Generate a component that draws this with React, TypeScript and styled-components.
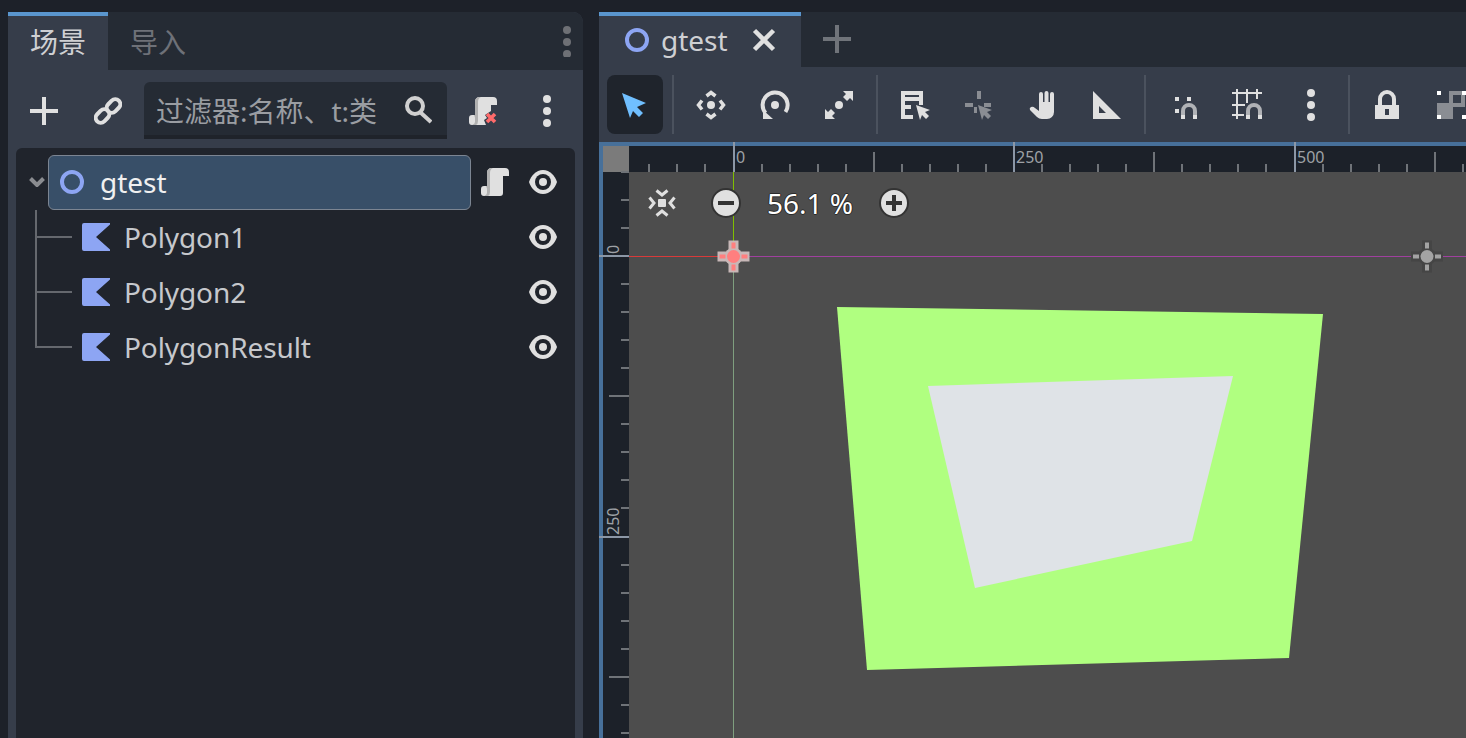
import React from 'react';
import styled, { createGlobalStyle } from 'styled-components';

const GlobalStyle = createGlobalStyle`
  html, body {
    margin: 0;
    padding: 0;
    background: #1d2129;
  }
  * {
    box-sizing: border-box;
  }
`;

const ICON = '#e0e0e0';
const ACCENT = '#8da5f3';

const Page = styled.div`
  width: 1466px;
  height: 738px;
  overflow: hidden;
  display: flex;
  gap: 16px;
  padding: 12px 0 0 8px;
  background: #1d2129;
  font-family: "Noto Sans", "Noto Sans CJK SC", sans-serif;
  font-size: 28px;
  color: #cfd0d3;
`;

const LeftDock = styled.section`
  width: 575px;
  display: flex;
  flex-direction: column;
  background: #363d4a;
  border-radius: 0 10px 0 0;
  overflow: hidden;
`;

const RightDock = styled.section`
  flex: 1;
  min-width: 0;
  display: flex;
  flex-direction: column;
  background: #363d4a;
`;

const TabBar = styled.div<{ $height: number }>`
  height: ${(p) => p.$height}px;
  flex-shrink: 0;
  display: flex;
  align-items: stretch;
  background: #252b34;
`;

const Tab = styled.div<{ $active?: boolean; $width: number }>`
  width: ${(p) => p.$width}px;
  display: flex;
  align-items: center;
  padding-bottom: 4px;
  border-top: 4px solid ${(p) => (p.$active ? '#5a96ce' : 'transparent')};
  background: ${(p) => (p.$active ? '#363d4a' : 'transparent')};
  color: ${(p) => (p.$active ? '#cfd0d3' : '#6e7178')};
`;

const DockTab = styled(Tab)`
  justify-content: center;
`;

const SceneTab = styled(Tab)`
  padding-left: 26px;
  gap: 12px;
`;

const CloseIcon = styled.svg`
  width: 24px;
  height: 24px;
  margin-left: 12px;
`;

const AddTab = styled.div`
  width: 72px;
  display: flex;
  align-items: center;
  justify-content: center;
  padding-bottom: 2px;
`;

const TabMenu = styled.div`
  margin-left: auto;
  width: 32px;
  display: flex;
  align-items: center;
  justify-content: center;
`;

const SceneToolbar = styled.div`
  height: 78px;
  flex-shrink: 0;
  display: flex;
  gap: 8px;
  padding: 12px 0 9px 8px;
`;

const FilterBox = styled.div`
  width: 303px;
  display: flex;
  align-items: center;
  justify-content: space-between;
  padding: 2px 15px 0 12px;
  background: #252b34;
  border-bottom: 4px solid #1f232a;
  border-radius: 6px 6px 0 0;
  color: #9a9da2;
  white-space: nowrap;
`;

const ToolButton = styled.div<{ $active?: boolean; $height?: number }>`
  width: 56px;
  height: ${(p) => p.$height ?? 59}px;
  flex-shrink: 0;
  display: flex;
  align-items: center;
  justify-content: center;
  border-radius: 8px;
  background: ${(p) => (p.$active ? '#1f242c' : 'transparent')};
`;

const TreePanel = styled.div`
  flex: 1;
  margin: 0 8px;
  padding-top: 7px;
  background: #20242c;
  border-radius: 6px 6px 0 0;
`;

const TreeRow = styled.div`
  height: 55px;
  display: flex;
  align-items: center;
  padding: 0 18px 2px 0;
`;

const Expander = styled.div`
  width: 32px;
  display: flex;
  justify-content: flex-end;
  padding-right: 3px;
`;

const SelectedLabel = styled.div`
  width: 423px;
  height: 55px;
  flex-shrink: 0;
  align-self: flex-start;
  display: flex;
  align-items: center;
  gap: 16px;
  padding: 0 0 2px 11px;
  margin-right: 10px;
  background: #384f68;
  border: 1px solid #7c8592;
  border-radius: 6px;
  color: #f0f0f0;
`;

const TreeGuide = styled.div<{ $last?: boolean }>`
  position: relative;
  width: 66px;
  height: 55px;
  flex-shrink: 0;
  align-self: flex-start;

  &::before {
    content: '';
    position: absolute;
    left: 19px;
    top: 0;
    width: 2px;
    height: ${(p) => (p.$last ? '28px' : '100%')};
    background: #65686e;
  }

  &::after {
    content: '';
    position: absolute;
    left: 19px;
    top: 26px;
    width: 37px;
    height: 2px;
    background: #65686e;
  }
`;

const NodeName = styled.span`
  margin-left: 14px;
  letter-spacing: -0.1px;
  color: #c6c8cc;
`;

const RowActions = styled.div`
  margin-left: auto;
  display: flex;
  align-items: center;
  gap: 20px;
`;

const EditorToolbar = styled.div`
  height: 75px;
  flex-shrink: 0;
  display: flex;
  align-items: flex-start;
  gap: 8px;
  padding: 8px 0 0 8px;
  overflow: hidden;
`;

const ToolSeparator = styled.div`
  width: 2px;
  height: 59px;
  margin: 0 1px;
  flex-shrink: 0;
  background: #4b525e;
`;

const Viewport = styled.div`
  position: relative;
  flex: 1;
  min-height: 0;
  border-top: 4px solid #47709a;
  border-left: 4px solid #47709a;
  background: #4d4d4d;
`;

const ViewportArt = styled.svg`
  position: absolute;
  inset: 0;
  width: 100%;
  height: 100%;
  overflow: visible;
`;

const ZoomControls = styled.div`
  position: absolute;
  left: 43px;
  top: 39px;
  height: 36px;
  display: flex;
  align-items: center;
`;

const ZoomValue = styled.span`
  width: 136px;
  text-align: center;
  color: #fff;
  text-shadow: -1px 0 #2a2a2a, 1px 0 #2a2a2a, 0 -1px #2a2a2a, 0 1px #2a2a2a;
`;

const ZoomFit = styled.svg`
  width: 32px;
  height: 32px;
  margin-right: 32px;
`;

const RulerLabel = styled.text`
  font-family: "Noto Sans", sans-serif;
  font-size: 16px;
  fill: #9ea1a6;
`;

const Icon: React.FC<{ size?: number; children: React.ReactNode }> = ({ size = 32, children }) => (
  <svg width={size} height={size} viewBox={`0 0 ${size} ${size}`} fill="none" style={{ flexShrink: 0 }}>
    {children}
  </svg>
);

const Plus: React.FC<{ color?: string }> = ({ color = ICON }) => (
  <Icon>
    <path d="M2 14h28v4H2zM14 2h4v28h-4z" fill={color} />
  </Icon>
);

const Dots: React.FC<{ color?: string }> = ({ color = ICON }) => (
  <Icon>
    <circle cx="16" cy="4" r="4" fill={color} />
    <circle cx="16" cy="16" r="4" fill={color} />
    <circle cx="16" cy="28" r="4" fill={color} />
  </Icon>
);

const Ring: React.FC = () => (
  <Icon size={24}>
    <circle cx="12" cy="12" r="10" stroke={ACCENT} strokeWidth="4" />
  </Icon>
);

const Eye: React.FC = () => (
  <Icon size={28}>
    <path d="M14 2C7 2 2 8 0 14c2 6 7 12 14 12s12-6 14-12C26 8 21 2 14 2z" fill={ICON} />
    <circle cx="14" cy="14" r="8" fill="#20242c" />
    <circle cx="14" cy="14" r="4" fill={ICON} />
  </Icon>
);

const ScriptIcon: React.FC = () => (
  <Icon size={28}>
    <path d="M11 0h13q4 0 4 4v4h-6v17q0 3-3 3H3q-3 0-3-3v-4q0-3 3-3h3V5q0-5 5-5z" fill={ICON} />
    <path d="M6 18V5q0-5 5-5h1q-3 1-3 5v19q0 3-2 4H3q3-1 3-3v-4q0-1-1-3z" fill="#b0b0b0" />
  </Icon>
);

const ScriptRemove: React.FC = () => (
  <Icon size={28}>
    <path d="M11 0h13q4 0 4 4v4h-6v6l-6 4 2 3-3 2 2 5H3q-3 0-3-3v-4q0-3 3-3h3V5q0-5 5-5z" fill={ICON} />
    <path d="M6 18V5q0-5 5-5h1q-3 1-3 5v19q0 3-2 4H3q3-1 3-3v-4q0-1-1-3z" fill="#b0b0b0" />
    <path d="M18 17l8 8m0-8l-8 8" stroke="#ff6b6b" strokeWidth="3.6" />
  </Icon>
);

const PolygonIcon: React.FC = () => (
  <Icon size={28}>
    <path d="M2 0h26v1.500L14 14l14 12.500V28H2q-2 0-2-2V2q0-2 2-2z" fill={ACCENT} />
  </Icon>
);

const Chevron: React.FC = () => (
  <svg width="16" height="10" viewBox="0 0 16 10" fill="none">
    <path d="M1.500 1.500L8 8l6.500-6.500" stroke="#8a8c90" strokeWidth="4" />
  </svg>
);

const Arch: React.FC<{ x: number }> = ({ x }) => (
  <>
    <path d={`M${x + 2} 30v-8a6 6 0 0 1 12 0v8`} stroke="#b0b2b6" strokeWidth="4" />
    <path d={`M${x} 26h4v4h-4zM${x + 12} 26h4v4h-4z`} fill={ICON} />
  </>
);

const Ticks: React.FC = () => {
  const step = 28.05;
  const x0 = 733.5;
  const y0 = 256;
  const h: React.ReactNode[] = [];
  const v: React.ReactNode[] = [];
  for (let n = -3; n * step + x0 < 1466; n++) {
    const x = Math.round(x0 + n * step);
    const major = Math.abs(n) % 10 === 0;
    const medium = Math.abs(n) % 5 === 0;
    const top = major ? 142 : medium ? 152 : 164;
    h.push(<rect key={n} x={x - 1} y={top} width="2" height={172 - top} fill={major ? '#8c97a6' : '#6f7378'} />);
  }
  for (let n = -3; n * step + y0 < 738; n++) {
    const y = Math.round(y0 + n * step);
    const major = Math.abs(n) % 10 === 0;
    const medium = Math.abs(n) % 5 === 0;
    const left = major ? 599 : medium ? 609 : 621;
    v.push(<rect key={n} x={left} y={y - 1} width={629 - left} height="2" fill={major ? '#8c97a6' : '#6f7378'} />);
  }
  return (
    <>
      {h}
      {v}
    </>
  );
};

const OriginMarker: React.FC<{ x: number; y: number; fill: string; frame: string }> = ({ x, y, fill, frame }) => (
  <g transform={`translate(${x} ${y})`}>
    <path d="M-5-16h10v11h11v10H5v11H-5V5h-11V-5h11z" fill={frame} />
    <circle r="9" fill={frame} />
    <path d="M-2-14h4v6h-4zM-2 8h4v6h-4zM-14-2h6v4h-6zM8-2h6v4H8z" fill={fill} />
    <circle r="6.500" fill={fill} />
  </g>
);

const ZoomCircle: React.FC<{ plus?: boolean }> = ({ plus }) => (
  <Icon size={32}>
    <circle cx="16" cy="16" r="14" fill={ICON} stroke="#333" strokeWidth="2" />
    <path d="M8 14h16v4H8z" fill="#333" />
    {plus && <path d="M14 8h4v16h-4z" fill="#333" />}
  </Icon>
);

const App: React.FC = () => {
  return (
    <Page>
      <GlobalStyle />
      <LeftDock>
        <TabBar $height={58}>
          <DockTab $active $width={100}>场景</DockTab>
          <DockTab $width={100}>导入</DockTab>
          <TabMenu>
            <Icon size={32}>
              <circle cx="16" cy="5" r="4" fill="#6e7075" />
              <circle cx="16" cy="17" r="4" fill="#6e7075" />
              <circle cx="16" cy="29" r="4" fill="#6e7075" />
            </Icon>
          </TabMenu>
        </TabBar>
        <SceneToolbar>
          <ToolButton $height={57}><Plus /></ToolButton>
          <ToolButton $height={57}>
            <Icon size={28}>
              <rect x="12" y="4" width="15" height="10" rx="5" transform="rotate(-45 19.500 9)" stroke={ICON} strokeWidth="4" />
              <rect x="1" y="14" width="15" height="10" rx="5" transform="rotate(-45 8.500 19)" stroke={ICON} strokeWidth="4" />
            </Icon>
          </ToolButton>
          <FilterBox>
            <span>过滤器:名称、t:类</span>
            <Icon size={28}>
              <circle cx="11" cy="10" r="8" stroke="#d0d0d0" strokeWidth="4" />
              <path d="M16 16l11 10" stroke="#d0d0d0" strokeWidth="4" />
            </Icon>
          </FilterBox>
          <ToolButton $height={57}><ScriptRemove /></ToolButton>
          <ToolButton $height={57}><Dots /></ToolButton>
        </SceneToolbar>
        <TreePanel>
          <TreeRow>
            <Expander><Chevron /></Expander>
            <SelectedLabel>
              <Ring />
              <span>gtest</span>
            </SelectedLabel>
            <RowActions>
              <ScriptIcon />
              <Eye />
            </RowActions>
          </TreeRow>
          {['Polygon1', 'Polygon2', 'PolygonResult'].map((name, i) => (
            <TreeRow key={name}>
              <TreeGuide $last={i === 2} />
              <PolygonIcon />
              <NodeName>{name}</NodeName>
              <RowActions><Eye /></RowActions>
            </TreeRow>
          ))}
        </TreePanel>
      </LeftDock>

      <RightDock>
        <TabBar $height={55}>
          <SceneTab $active $width={202}>
            <Ring />
            <span>gtest</span>
            <CloseIcon viewBox="0 0 24 24" fill="none">
              <path d="M2.500 2.500l19 19m0-19l-19 19" stroke={ICON} strokeWidth="4.500" />
            </CloseIcon>
          </SceneTab>
          <AddTab><Plus color="#70747a" /></AddTab>
        </TabBar>

        <EditorToolbar>
          <ToolButton $active>
            <Icon>
              <path d="M0 0l24 10-9 4 6 6-4 4-6-6-3 7z" transform="translate(3 4)" fill="#70bfff" />
            </Icon>
          </ToolButton>
          <ToolSeparator />
          <ToolButton>
            <Icon>
              <circle cx="16" cy="16" r="4" fill={ICON} />
              <path d="M11.500 7L16 3.500 20.500 7M11.500 25l4.500 3.500 4.500-3.500M7 11.500L3.500 16 7 20.500M25 11.500l3.500 4.500-3.500 4.500" stroke={ICON} strokeWidth="3.500" />
            </Icon>
          </ToolButton>
          <ToolButton>
            <Icon>
              <circle cx="16" cy="16" r="4" fill={ICON} />
              <path d="M26.500 23A12.500 12.500 0 1 0 6.500 24" stroke={ICON} strokeWidth="4" />
              <path d="M4 21l10 9H4z" fill={ICON} />
            </Icon>
          </ToolButton>
          <ToolButton>
            <Icon>
              <circle cx="16" cy="16" r="4" fill={ICON} />
              <path d="M20 2h10v10l-3-3-3 3-4-4 3-3zM2 20l3 3 3-3 4 4-3 3 3 3H2z" fill={ICON} />
            </Icon>
          </ToolButton>
          <ToolSeparator />
          <ToolButton>
            <Icon>
              <path d="M2 2h22v14h-4v-4H6v4h6v4H6v6h8v4H2zM6 6v2h14V6z" fill={ICON} fillRule="evenodd" />
              <path d="M17 16l14 5-5 2 4 4-3 3-4-4-2 5z" fill={ICON} />
            </Icon>
          </ToolButton>
          <ToolButton>
            <Icon>
              <g fill="#8a8d93">
                <path d="M14 2h4v8h-4zM2 14h8v4H2zM14 24h-3v-6h3zM21 14h7v4h-7z" />
                <path d="M15 16l14 5-5 2 4 4-3 3-4-4-2 5z" />
              </g>
            </Icon>
          </ToolButton>
          <ToolButton>
            <Icon>
              <path d="M12 14V5a2 2 0 0 1 4 0v8h1.500V4a2 2 0 0 1 4 0v9H23V5a2 2 0 0 1 4 0v18a7 7 0 0 1-7 7h-5q-3 0-5-2l-7-7q-1-2 1-3 2-1 4 1l4 3z" fill={ICON} />
            </Icon>
          </ToolButton>
          <ToolButton>
            <Icon>
              <path d="M2 2l28 28H2zM8 17v7h7z" fill={ICON} fillRule="evenodd" />
            </Icon>
          </ToolButton>
          <ToolSeparator />
          <ToolButton>
            <Icon>
              <path d="M8 8h4v4H8zM20 8h4v4h-4zM8 20h4v4H8z" fill={ICON} />
              <Arch x={14} />
            </Icon>
          </ToolButton>
          <ToolButton>
            <Icon>
              <path d="M6 0v30M16 0v14M26 0v10M1 4h30M1 16h13M1 26h12" stroke={ICON} strokeWidth="2" />
              <Arch x={15} />
            </Icon>
          </ToolButton>
          <ToolButton><Dots /></ToolButton>
          <ToolSeparator />
          <ToolButton>
            <Icon>
              <path d="M9 16v-6a7 7 0 0 1 14 0v6" stroke={ICON} strokeWidth="4" />
              <path d="M4 16h24v14H4zM14 20v6h4v-6z" fill={ICON} fillRule="evenodd" />
            </Icon>
          </ToolButton>
          <ToolButton>
            <Icon>
              <path d="M14 2h16v16H18v12H2V14h12zM18 6v8h8V6z" fill="#8a8d93" fillRule="evenodd" />
              <path d="M2 2h4v4H2zM27 2h4v4h-4zM2 26h4v4H2zM27 26h4v4h-4z" fill="#fff" />
            </Icon>
          </ToolButton>
        </EditorToolbar>

        <Viewport>
          <ViewportArt viewBox="603 146 863 592">
            <path d="M837 307L1323 314 1289 658 867 670z" fill="#b0ff80" />
            <path d="M928 386L1233 376 1192 541 975 588z" fill="#dfe3e7" />
            <path d="M733.500 172V256" stroke="#7fbf00" strokeWidth="1" />
            <path d="M733.500 256V738" stroke="#7f9f7f" strokeWidth="1" />
            <path d="M629 256.500H733" stroke="#d83a3a" strokeWidth="1" />
            <path d="M733 256.500H1466" stroke="#a0409f" strokeWidth="1" />
            <OriginMarker x={733.500} y={256.500} fill="#ff7f7f" frame="#c8b8b8" />
            <OriginMarker x={1427} y={256.500} fill="#a3a3a3" frame="#454545" />
            <rect x="629" y="146" width="837" height="26" fill="#1c2129" />
            <rect x="603" y="172" width="26" height="566" fill="#1c2129" />
            <rect x="603" y="146" width="26" height="26" fill="#7b7b7b" />
            <Ticks />
            <RulerLabel x="736" y="163">0</RulerLabel>
            <RulerLabel x="1016" y="163">250</RulerLabel>
            <RulerLabel x="1297" y="163">500</RulerLabel>
            <RulerLabel transform="translate(619 254) rotate(-90)">0</RulerLabel>
            <RulerLabel transform="translate(619 535) rotate(-90)">250</RulerLabel>
          </ViewportArt>
          <ZoomControls>
            <ZoomFit viewBox="0 0 32 32" fill="none">
              <rect x="12" y="12" width="8" height="8" rx="1" fill={ICON} />
              <path d="M10.500 3.500L16 8l5.500-4.500M10.500 28.500L16 24l5.500 4.500M3.500 10.500L8 16l-4.500 5.500M28.500 10.500L24 16l4.500 5.500" stroke={ICON} strokeWidth="3" />
            </ZoomFit>
            <ZoomCircle />
            <ZoomValue>56.1 %</ZoomValue>
            <ZoomCircle plus />
          </ZoomControls>
        </Viewport>
      </RightDock>
    </Page>
  );
};

export default App;
